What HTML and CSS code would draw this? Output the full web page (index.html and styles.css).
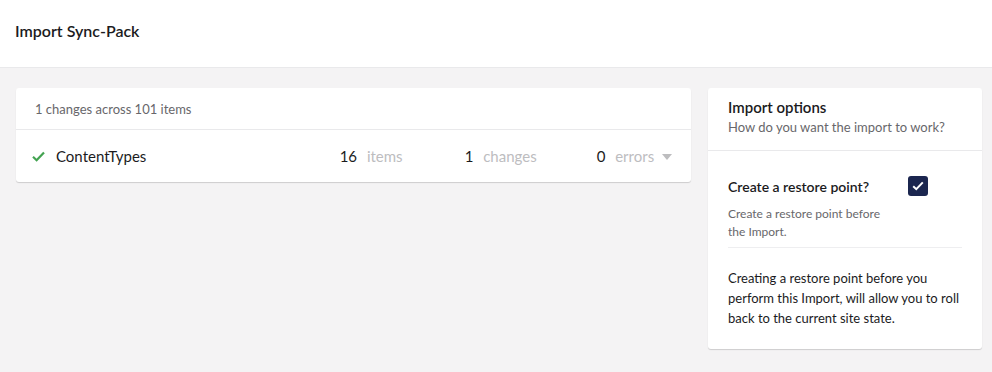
FILE: index.html
```html
<!DOCTYPE html>
<html lang="en">
<head>
<meta charset="utf-8" />
<meta name="viewport" content="width=device-width, initial-scale=1" />
<title>Import Sync-Pack</title>
<link rel="stylesheet" href="styles.css">
</head>
<body>

<header class="page-header">
  <h1>Import Sync-Pack</h1>
</header>

<main class="page-body">
  <section class="card results">
    <div class="results-head">1 changes across 101 items</div>
    <div class="result-row">
      <svg class="ok-icon" width="13" height="11" viewBox="0 0 13 11" aria-hidden="true">
        <path d="M1 5.8 L4.6 9.2 L12 1.4" fill="none" stroke="#43a351" stroke-width="2.2"/>
      </svg>
      <span class="result-name">ContentTypes</span>
      <span class="stat stat-items"><b>16</b> items</span>
      <span class="stat stat-changes"><b>1</b> changes</span>
      <span class="stat stat-errors"><b>0</b> errors <i class="caret"></i></span>
    </div>
  </section>

  <aside class="card options">
    <div class="options-head">
      <h2>Import options</h2>
      <p>How do you want the import to work?</p>
    </div>
    <div class="options-body">
      <div class="option">
        <div class="option-text">
          <label for="restorePoint">Create a restore point?</label>
          <p>Create a restore point before the Import.</p>
        </div>
        <span class="checkbox" id="restorePoint" role="checkbox" aria-checked="true">
          <svg width="12" height="10" viewBox="0 0 12 10" aria-hidden="true">
            <path d="M1.2 5.2 L4.3 8.2 L10.8 1.4" fill="none" stroke="#fff" stroke-width="2"/>
          </svg>
        </span>
      </div>
      <p class="option-note">Creating a restore point before you perform this Import, will allow you to roll back to the current site state.</p>
    </div>
  </aside>
</main>

</body>
</html>
```

FILE: styles.css
```css
:root {
  --bg: #f4f3f4;
  --card: #ffffff;
  --line: #e9e9eb;
  --text: #1b1b1d;
  --muted: #68676b;
  --faint: #bdbdbf;
  --navy: #1b264f;
}
*{box-sizing:border-box;margin:0;padding:0;}
body{
  background:var(--bg);
  color:var(--text);
  font-family:Lato,"Open Sans",Arial,sans-serif;
  width:992px;
  height:372px;
  overflow:hidden;
}
.page-header{
  background:var(--card);
  height:68px;
  border-bottom:1px solid var(--line);
  padding:21px 15px 0;
}
.page-header h1{font-size:16px;font-weight:600;line-height:20px;}
.page-body{
  display:flex;
  align-items:flex-start;
  gap:17px;
  padding:20px 10px 0 16px;
}
.card{
  background:var(--card);
  border-radius:3px;
  box-shadow:0 1px 1px rgba(0,0,0,0.16);
}
.results{width:675px;}
.results-head{
  height:42px;
  padding:0 19px;
  display:flex;
  align-items:center;
  font-size:13px;
  color:var(--muted);
  border-bottom:1px solid var(--line);
}
.result-row{
  height:52px;
  display:flex;
  align-items:center;
  padding:0 19px 0 16px;
  font-size:15px;
}
.ok-icon{margin-right:11px;flex:none;}
.result-name{flex:1;}
.stat{color:var(--faint);white-space:nowrap;}
.stat b{font-weight:400;color:var(--text);margin-right:6px;}
.stat-items{width:125px;}
.stat-changes{width:132px;}
.caret{
  display:inline-block;
  width:0;height:0;
  border-left:5px solid transparent;
  border-right:5px solid transparent;
  border-top:6px solid var(--faint);
  margin-left:4px;
  vertical-align:2px;
}
.options{width:274px;}
.options-head{
  padding:9px 20px 13px;
  border-bottom:1px solid var(--line);
}
.options-head h2{font-size:15px;font-weight:600;line-height:20px;}
.options-head p{font-size:13px;line-height:20px;color:var(--muted);}
.options-body{padding:26px 20px 21px;}
.option{
  display:flex;
  gap:20px;
  padding-bottom:6px;
  border-bottom:1px solid #eeeef0;
}
.option-text{width:160px;}
.option-text label{display:block;font-size:14px;font-weight:600;line-height:20px;white-space:nowrap;}
.option-text p{margin-top:8px;font-size:12px;line-height:18px;color:var(--muted);}
.checkbox{
  width:20px;height:20px;
  margin-top:-1px;
  border-radius:3px;
  background:var(--navy);
  display:flex;
  align-items:center;
  justify-content:center;
}
.option-note{margin-top:20px;font-size:13px;line-height:20px;}
```
